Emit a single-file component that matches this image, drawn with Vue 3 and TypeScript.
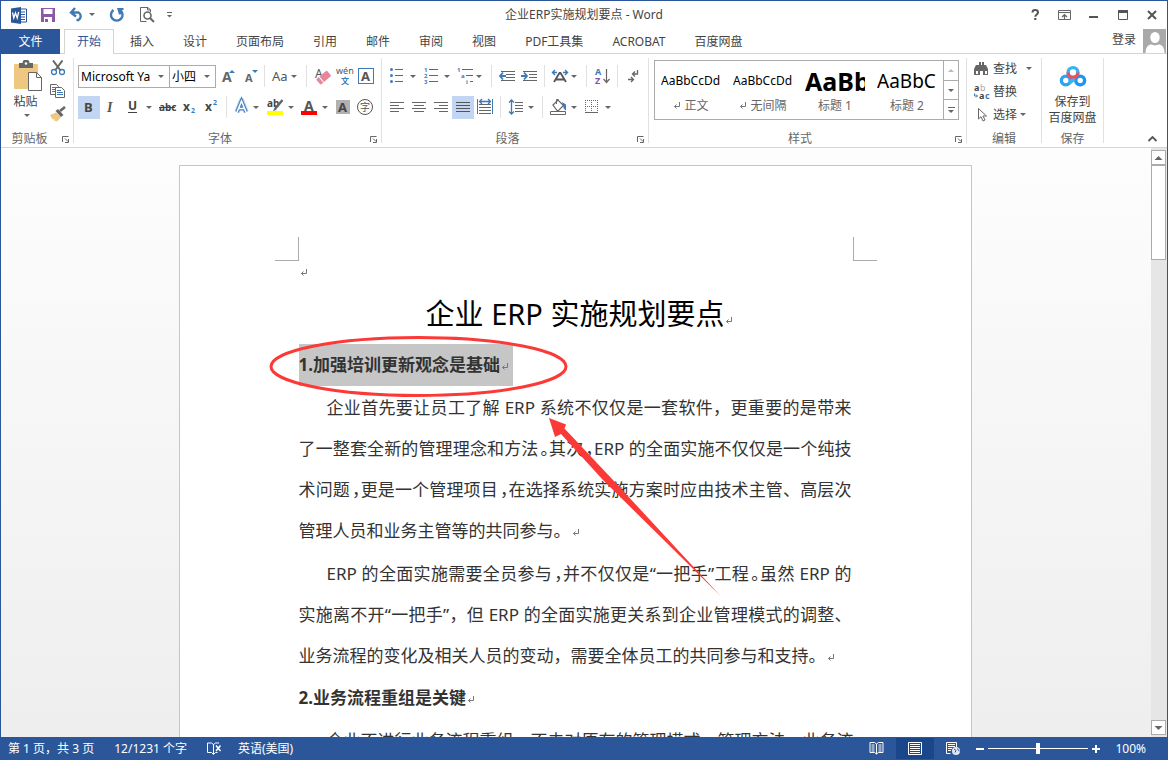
<script setup lang="ts">
import { h, ref } from 'vue'

type Icon = [x: number, y: number, w: number, h: number, body: string]

const G = '#666'
const B = '#3f7ab8'

const tri = (x: number, y: number) => `<path d="M${x - 3} ${y - 1}h6l-3 3z" fill="${G}"/>`
const lines = (rows: [number, number, number][], c = G) =>
  rows.map(([x, y, w]) => `<path d="M${x} ${y}h${w}v1h${-w}z" fill="${c}"/>`).join('')
const txt = (x: number, y: number, s: number, t: string, c = '#555', extra = '') =>
  `<text x="${x}" y="${y}" font-size="${s}" fill="${c}" ${extra}>${t}</text>`
const bold = 'font-weight="700"'

const icons: Record<string, Icon> = {
  word: [11, 7, 20, 17, `<path d="M19 9h7.500v13H19z" fill="#fff" stroke="#2b579a"/><path d="M21 12h4M21 14.500h4M21 17h4M21 19.500h4" stroke="#2b579a"/><path d="M11 8.500 21 7v17l-10-1.500z" fill="#2b579a"/><path d="m12.500 12.500 1.300 5.500 1.700-5 1.700 5 1.500-6" fill="none" stroke="#fff" stroke-width="1.300"/>`],
  save: [41, 8, 17, 14, `<path d="M41 8h14v14H41z" fill="#8a5aa8"/><path d="M43.500 9h9v5h-9zM44 17h8v5h-8z" fill="#fff"/><path d="M45 19h3v3h-3z" fill="#8a5aa8"/>`],
  undo: [68, 7, 31, 17, `<path d="m75 8-4 4.500 5 4M71.500 12.500h7a4.300 4.300 0 0 1 0 7.500h-2" fill="none" stroke="${B}" stroke-width="2.400"/>${tri(92, 14)}`],
  redo: [109, 7, 20, 17, `<path d="M113.500 10a5.800 5.800 0 1 0 6.500 0" fill="none" stroke="${B}" stroke-width="2.400"/><path d="M117 8h6.500v2H121v4.500h-2z" fill="${B}"/>`],
  preview: [139, 6, 17, 18, `<path d="M150.500 12V9.500l-3-2h-7v14h6" fill="none" stroke="${G}"/><path d="M147.500 7v3h3" fill="none" stroke="${G}"/><circle cx="147.500" cy="15.500" r="3.500" fill="#fff" stroke="${G}" stroke-width="1.600"/><path d="m150 18 4 4" stroke="${G}" stroke-width="2"/>`],
  custom: [166, 12, 8, 8, `<path d="M167 13h5v1h-5z" fill="${G}"/><path d="M167 16h5l-2.500 2.500z" fill="${G}"/>`],
  help: [1029, 7, 13, 16, `<path d="M1032.500 12.500c0-3.300 5.500-3.300 5.500 0 0 2-2.700 1.900-2.700 4.300" fill="none" stroke="#555" stroke-width="2"/><path d="M1034.200 18h2.200v2h-2.200z" fill="#555"/>`],
  ropt: [1058, 10, 14, 11, `<path d="M1058.500 10.500h12v9h-12zM1058 12.500h13" fill="none" stroke="${G}"/><path d="M1064.500 19v-4M1062 17l2.500-2.500 2.500 2.500" fill="none" stroke="${G}" stroke-width="1.200"/>`],
  min: [1088, 10, 14, 11, `<path d="M1089 16h9v2h-9z" fill="#555"/>`],
  max: [1118, 10, 13, 11, `<path d="M1118.500 10.500h9v9h-9z" fill="none" stroke="#555"/><path d="M1118 10h10v3h-10z" fill="#555"/>`],
  close: [1147, 10, 10, 11, `<path d="m1148 11 8 8m0-8-8 8" stroke="#555" stroke-width="2"/>`],
  user: [1143, 29, 23, 24, `<path d="M1143 29h23v24h-23z" fill="#a9a9a9"/><ellipse cx="1155" cy="37.500" rx="4.700" ry="5.500" fill="#fff"/><path d="M1145.500 53c0-6 3-8.500 6-8.500l3.500 1 3.500-1c3 0 6 2.500 6 8.500z" fill="#fff"/>`],
  paste: [12, 61, 31, 32, `<rect x="14" y="65" width="24" height="25" rx="1" fill="#eec780"/><path d="M19 64h3.500a3.500 3.500 0 0 1 7 0H33v5H19z" fill="${G}"/><circle cx="26" cy="64.500" r="1.300" fill="#fff"/><path d="M28.500 73.500h8l5 5v13h-13z" fill="#fff" stroke="${G}"/><path d="M36.500 73.500v5h5" fill="none" stroke="${G}"/>`],
  pasteArrow: [22, 113, 10, 8, tri(26, 116)],
  cut: [50, 60, 17, 16, `<path d="m53 60.500 7.500 10M62.500 60.500 55 70.500" stroke="${G}" stroke-width="2"/><circle cx="54" cy="72" r="2.500" fill="none" stroke="${B}" stroke-width="1.300"/><circle cx="62" cy="72" r="2.500" fill="none" stroke="${B}" stroke-width="1.300"/>`],
  copy: [50, 83, 17, 16, `<path d="M50.500 84.500h6l2 2v8h-8z" fill="#fff" stroke="${G}"/><path d="M52 87.500h4M52 89.500h3M52 91.500h3" stroke="${B}"/><path d="M55.500 87.500h6l3 3v7h-9z" fill="#fff" stroke="${G}"/><path d="M57 90.500h4M57 92.500h6M57 94.500h6" stroke="${B}"/>`],
  brush: [50, 106, 17, 16, `<path d="m50 115 6-2.500 5 4.500-4 4.500-3-1 .5-1.500-2 .5z" fill="#eec780"/><path d="m55.500 111 2.500-2 5.500 6-2.500 2z" fill="${G}"/><path d="m60 111 5-4" stroke="${G}" stroke-width="2.600"/>`],
  grow: [216, 65, 24, 23, `${txt(222, 82, 14, 'A', G, bold)}<path d="M229 73h6l-3-3z" fill="${B}"/>`],
  shrink: [240, 65, 22, 23, `${txt(245, 82, 11, 'A', G, bold)}<path d="M252 70h6l-3 3z" fill="${B}"/>`],
  aa: [267, 65, 37, 23, txt(272, 81, 13, 'Aa') + tri(294, 76)],
  erase: [309, 65, 24, 23, `${txt(315, 78, 12, 'A')}<g transform="rotate(-40 324 78)"><rect x="317" y="74" width="14" height="7" rx="1" fill="#e8869b"/><path d="M321 74v7" stroke="#fff"/></g>`],
  wen: [333, 65, 23, 23, txt(336, 74, 9, 'wén') + txt(341, 84, 8, '文', B, bold)],
  abox: [356, 65, 22, 23, `<rect x="358.500" y="68.500" width="15" height="15" fill="#fff" stroke="${B}"/>${txt(361, 81, 13, 'A', '#555', bold)}`],
  bold: [78, 96, 22, 23, txt(84, 112, 13, 'B', '#444', bold)],
  italic: [100, 96, 22, 23, `<text x="107" y="112" font-size="14" font-style="italic" font-weight="700" font-family="Liberation Serif, serif" fill="#555">I</text>`],
  under: [122, 96, 33, 23, `${txt(128, 110, 12, 'U', '#444', bold)}<path d="M128 112h9v1h-9z" fill="#444"/>${tri(149, 107)}`],
  strike: [155, 96, 24, 23, `${txt(159, 111, 10, 'abc', '#444', bold)}<path d="M159 107h16v1h-16z" fill="#444"/>`],
  sub: [179, 96, 22, 23, txt(183, 111, 12, 'x', '#444', bold) + txt(191, 113, 7, '2', B, bold)],
  sup: [201, 96, 23, 23, txt(205, 111, 12, 'x', '#444', bold) + txt(213, 105, 7, '2', B, bold)],
  glow: [229, 96, 34, 23, `<path d="m237 112 4.500-11.500L246 112M239 108.500h5" fill="none" stroke="#c3d9f0" stroke-width="5.500" stroke-linejoin="round"/><path d="m237 112 4.500-11 4.500 11M239 108.500h5" fill="none" stroke="${B}" stroke-width="3.600"/><path d="m237 112 4.500-11 4.500 11M239 108.500h5" fill="none" stroke="#fff" stroke-width="1.600"/>${tri(256, 107)}`],
  hilite: [263, 96, 34, 23, `${txt(267, 107, 10, 'ab', '#444', bold)}<path d="m282.500 100-7.500 9" stroke="${G}" stroke-width="2.500"/><path d="M267 111h16v4h-16z" fill="#ff0"/><path d="m273 111 1.500-3 2 2z" fill="${G}"/>${tri(291, 107)}`],
  fcolor: [297, 96, 34, 23, `${txt(304, 111, 14, 'A', '#555', bold)}<path d="M301 111h16v4h-16z" fill="red"/>${tri(325, 107)}`],
  shade: [331, 96, 23, 23, `<path d="M336 100h14v14h-14z" fill="#b1b1b1"/>${txt(338, 112, 13, 'A', '#444', bold)}`],
  circled: [354, 96, 23, 23, `<circle cx="365" cy="107" r="7.500" fill="none" stroke="#555"/>${txt(360, 111, 10, '字')}`],
  bullets: [386, 65, 33, 23, `<circle cx="391.500" cy="69.500" r="1.500" fill="${B}"/><circle cx="391.500" cy="75.500" r="1.500" fill="${B}"/><circle cx="391.500" cy="81.500" r="1.500" fill="${B}"/>${lines([[395, 69, 8], [395, 75, 8], [395, 81, 8]])}${tri(413, 76)}`],
  numbers: [419, 65, 35, 23, `${txt(424, 72, 6, '1', B, bold)}${txt(424, 78, 6, '2', B, bold)}${txt(424, 84, 6, '3', B, bold)}${lines([[429, 69, 9], [429, 75, 9], [429, 81, 9]])}${tri(447, 76)}`],
  multi: [454, 65, 35, 23, `${txt(457, 72, 6, '1', B, bold)}${txt(461, 78, 6, 'a', B, bold)}${txt(466, 84, 6, 'i', B, bold)}${lines([[462, 69, 11], [466, 75, 7], [470, 81, 3]])}${tri(479, 76)}`],
  outdent: [494, 65, 24, 23, `${lines([[501, 71, 14], [506, 74, 9], [506, 77, 9], [501, 80, 14]])}<path d="m503 72.500-3 3.500 3 3.500M500 76h6" fill="none" stroke="${B}" stroke-width="1.800"/>`],
  indent: [518, 65, 24, 23, `${lines([[523, 71, 14], [529, 74, 8], [529, 77, 8], [523, 80, 14]])}<path d="m524 72.500 3 3.500-3 3.500M521 76h6" fill="none" stroke="${B}" stroke-width="1.800"/>`],
  asian: [547, 65, 37, 23, `<path d="m554 82 5.500-9h1l5.500 9M556 79.500h8" fill="none" stroke="#555" stroke-width="1.800"/><path d="m555 70-2.500 2.500L555 75M553 72.500h4M565 70l2.500 2.500L565 75M567 72.500h-4" fill="none" stroke="${B}" stroke-width="1.400"/>${tri(574, 76)}`],
  sort: [589, 65, 26, 23, `${txt(595, 75, 9, 'A', B, bold)}${txt(595, 84, 9, 'Z', '#8a4fa8', bold)}<path d="M606.500 69v13M603.500 79l3 3.500 3-3.500" fill="none" stroke="${G}" stroke-width="1.200"/>`],
  marks: [620, 65, 24, 23, `<path d="M637.500 70v4h-5M635 71.500 632.500 74l2.500 2.500M628 79.500h5M631 77l2.500 2.500-2.500 2.500" fill="none" stroke="${G}" stroke-width="1.300"/>`],
  left: [386, 96, 22, 23, lines([[390, 102, 14], [390, 105, 9], [390, 108, 14], [390, 111, 9]])],
  center: [408, 96, 22, 23, lines([[412, 102, 14], [414, 105, 10], [412, 108, 14], [414, 111, 10]])],
  right: [430, 96, 22, 23, lines([[434, 102, 14], [439, 105, 9], [434, 108, 14], [439, 111, 9]])],
  justify: [452, 96, 22, 23, lines([[456, 102, 14], [456, 105, 14], [456, 108, 14], [456, 111, 14]], '#555')],
  distrib: [474, 96, 24, 23, `${lines([[479, 104, 12], [479, 107, 12], [479, 110, 12], [479, 113, 12]])}<path d="M477.500 99v15M492.500 99v15" stroke="${B}"/><path d="M480 101.500h10M482 99l-2.500 2.500L482 104M488 99l2.500 2.500L488 104" fill="none" stroke="${B}" stroke-width="1.300"/>`],
  spacing: [503, 96, 37, 23, `${lines([[515, 102, 8], [515, 105, 8], [515, 108, 8], [515, 111, 8]])}<path d="M511.500 100v14M509 102.500l2.500-2.500 2.500 2.500M509 111.500l2.500 2.500 2.500-2.500" fill="none" stroke="${B}" stroke-width="1.300"/>${tri(531, 107)}`],
  fill: [545, 96, 37, 23, `<path d="m553 105 5-5 5.500 5.500-5 5h-1.500z" fill="#fff" stroke="${G}" stroke-width="1.200"/><path d="M556.500 104v-4.500h2" fill="none" stroke="${G}"/><path d="m562 102 4 2.500v6l-2-1.500-1-3z" fill="${B}"/><path d="M550.500 111.500h15v3h-15z" fill="#fff" stroke="${G}"/>${tri(574, 107)}`],
  border: [582, 96, 34, 23, `<path d="M585.500 100v12M591.500 100v12M597.500 100v12M585 100.500h13M585 106.500h13" stroke="${G}" stroke-dasharray="1 1"/><path d="M585 112h13v1h-13z" fill="${G}"/>${tri(608, 107)}`],
  find: [973, 60, 18, 16, `<path d="M976 64h3v-3h2v3h1v-3h2v3h2l2 4v6h-5v-4h-3v4h-6v-6z" fill="${G}"/><path d="M975.500 69.500h3v4h-3zM984.500 69.500h3v4h-3z" fill="#fff" stroke="${G}"/>`],
  replace: [973, 82, 18, 18, `${txt(974, 90, 9, 'a', '#444', bold)}${txt(980, 90, 9, 'b', '#aaa')}${txt(979, 98, 9, 'a', '#444', bold)}${txt(985, 98, 9, 'c', B, bold)}<path d="M974.500 92.500v2.500h3M976 93.500l1.500 1.500-1.500 1.500" fill="none" stroke="${B}"/>`],
  select: [973, 106, 18, 16, `<path d="M978.500 107.500v10.500l2.500-2.300 2 4.300 2-1-2-4h3.500z" fill="#fff" stroke="${G}"/>`],
  down: [1025, 73, 9, 6, tri(1029, 75)],
  cloud: [1058, 64, 28, 23, `<g fill="none" stroke-width="3.400"><circle cx="1064.800" cy="79.500" r="4.400" stroke="#2ba3f0"/><circle cx="1079.200" cy="79.500" r="4.400" stroke="#1b95f3"/><circle cx="1072" cy="71.500" r="4.900" stroke="#35b6ee"/><path d="M1067.100 71.500a4.900 4.900 0 0 0 9.800 0" stroke="#f04c63"/><path d="m1068.500 82 5-4" stroke="#35b6ee"/></g>`],
  collapse: [1147, 135, 11, 8, `<path d="m1148.500 141 4-4 4 4" fill="none" stroke="#555" stroke-width="1.800"/>`],
  launch: [366, 135, 11, 8, `<path d="M370.500 142v-5.500h6" fill="none" stroke="${G}"/><path d="m373 138.500 3 3M376.500 139v3.500H373" fill="none" stroke="${G}"/>`],
  gUp: [946, 67, 10, 7, `<path d="M948 72h6l-3-3z" fill="#bbb"/>`],
  gDown: [946, 87, 10, 8, tri(951, 91)],
  gMore: [946, 105, 10, 10, `<path d="M948 107h7v1h-7z" fill="${G}"/>${tri(951, 111)}`],
  sUp: [1152, 151, 13, 13, `<path d="M1154.500 160h8l-4-4z" fill="${G}"/>`],
  sDown: [1152, 721, 13, 13, `<path d="M1154.500 726h8l-4 4z" fill="${G}"/>`],
  ret: [0, 0, 8, 8, `<path d="M6.500 0v4.500h-5M3.500 2.500l-2 2 2 2" fill="none" stroke="#777"/>`],
  proof: [212, 740, 16, 15, `<path d="M218.500 743v10M218.500 743.500l-2-1.500h-4v9.500h4l2 2 2-2h2M218.500 743.500l2-1.500h3.500" fill="none" stroke="#fff"/><path d="m221 744.500 4.500 5.500m0-5.500L221 750" stroke="#fff" stroke-width="1.500"/>`],
  read: [870, 740, 16, 15, `<path d="M877.500 743v10M877.500 743l-2-1.500h-4.500v10h4.500l2 1.500 2-1.500h4.500v-10h-4.500z" fill="none" stroke="#fff"/><path d="M872.500 744h3M872.500 746h3M872.500 748h3M872.500 750h3M879.500 744h3M879.500 746h3M879.500 748h3M879.500 750h3" stroke="#fff"/>`],
  print: [908, 740, 16, 15, `<path d="M909.500 741.500h13v12h-13z" fill="none" stroke="#fff"/>${lines([[911, 743, 10], [911, 745, 10], [911, 747, 10], [911, 749, 10], [911, 751, 10]], '#fff')}`],
  web: [946, 740, 17, 15, `<path d="M957.500 746v-4.500h-10v11h4" fill="none" stroke="#fff"/>${lines([[949, 743, 7], [949, 745, 7], [949, 747, 4], [949, 749, 3]], '#fff')}<circle cx="957" cy="750" r="4" fill="#dfe8f5"/><path d="m955 748 2 1.500-1 2M958.500 747.500l1 2 1 .5" fill="none" stroke="#2b579a"/>`],
}

const Ico = (p: { n: string }) => {
  const [x, y, w, ht, body] = icons[p.n]
  return h('svg', { viewBox: `${x} ${y} ${w} ${ht}`, width: w, height: ht, innerHTML: body, 'aria-hidden': 'true' })
}
Ico.props = ['n']

const tabs = ['开始', '插入', '设计', '页面布局', '引用', '邮件', '审阅', '视图', 'PDF工具集', 'ACROBAT', '百度网盘']
const activeTab = ref('开始')

type Cmd = [icon: string, label: string] | null
const fontTop: Cmd[] = [['grow', '增大字号'], ['shrink', '减小字号'], null, ['aa', '更改大小写'], null, ['erase', '清除格式'], ['wen', '拼音指南'], ['abox', '字符边框']]
const fontBottom: Cmd[] = [['bold', '加粗'], ['italic', '倾斜'], ['under', '下划线'], ['strike', '删除线'], ['sub', '下标'], ['sup', '上标'], null, ['glow', '文本效果'], ['hilite', '突出显示'], ['fcolor', '字体颜色'], ['shade', '字符底纹'], ['circled', '带圈字符']]
const paraTop: Cmd[] = [['bullets', '项目符号'], ['numbers', '编号'], ['multi', '多级列表'], null, ['outdent', '减少缩进量'], ['indent', '增加缩进量'], null, ['asian', '中文版式'], null, ['sort', '排序'], null, ['marks', '显示编辑标记']]
const paraBottom: Cmd[] = [['left', '左对齐'], ['center', '居中'], ['right', '右对齐'], ['justify', '两端对齐'], ['distrib', '分散对齐'], null, ['spacing', '行距'], null, ['fill', '底纹'], ['border', '边框']]
const pressed = ref(['bold', 'justify'])

const styles = [
  { name: '正文', sample: 'AaBbCcDd', cls: 'body', mark: true },
  { name: '无间隔', sample: 'AaBbCcDd', cls: 'body', mark: true },
  { name: '标题 1', sample: 'AaBb', cls: 'h1', mark: false },
  { name: '标题 2', sample: 'AaBbC', cls: 'h2', mark: false },
]
const zoom = ref(50)
</script>

<template>
  <div class="window">
    <header class="titlebar">
      <div class="quick">
        <Ico n="word" />
        <button aria-label="保存"><Ico n="save" /></button>
        <button aria-label="撤消"><Ico n="undo" /></button>
        <button aria-label="重复"><Ico n="redo" /></button>
        <button aria-label="打印预览"><Ico n="preview" /></button>
        <button aria-label="自定义快速访问工具栏"><Ico n="custom" /></button>
      </div>
      <h1 class="caption">企业ERP实施规划要点 - Word</h1>
      <div class="winctl">
        <button aria-label="帮助"><Ico n="help" /></button>
        <button aria-label="功能区显示选项"><Ico n="ropt" /></button>
        <button aria-label="最小化"><Ico n="min" /></button>
        <button aria-label="最大化"><Ico n="max" /></button>
        <button aria-label="关闭"><Ico n="close" /></button>
      </div>
    </header>

    <nav class="tabs">
      <button class="file">文件</button>
      <button v-for="t in tabs" :key="t" class="tab" :class="{ on: t === activeTab }" @click="activeTab = t">{{ t }}</button>
      <a class="login" href="#">登录</a>
      <Ico n="user" />
    </nav>

    <section class="ribbon">
      <div class="group clip">
        <div class="content">
          <button class="paste"><Ico n="paste" /><span>粘贴</span><Ico n="pasteArrow" /></button>
          <div class="stack">
            <button aria-label="剪切"><Ico n="cut" /></button>
            <button aria-label="复制"><Ico n="copy" /></button>
            <button aria-label="格式刷"><Ico n="brush" /></button>
          </div>
        </div>
        <footer><span>剪贴板</span><button aria-label="剪贴板选项"><Ico n="launch" /></button></footer>
      </div>

      <div class="group font">
        <div class="content rows">
          <div class="row">
            <label class="combo family"><select aria-label="字体"><option>Microsoft Ya</option></select><Ico n="down" /></label>
            <label class="combo size"><select aria-label="字号"><option>小四</option></select><Ico n="down" /></label>
            <template v-for="(c, i) in fontTop" :key="i">
              <button v-if="c" :aria-label="c[1]"><Ico :n="c[0]" /></button>
              <i v-else class="sep"></i>
            </template>
          </div>
          <div class="row">
            <template v-for="(c, i) in fontBottom" :key="i">
              <button v-if="c" :aria-label="c[1]" :class="{ pressed: pressed.includes(c[0]) }"><Ico :n="c[0]" /></button>
              <i v-else class="sep"></i>
            </template>
          </div>
        </div>
        <footer><span>字体</span><button aria-label="字体选项"><Ico n="launch" /></button></footer>
      </div>

      <div class="group para">
        <div class="content rows">
          <div v-for="(r, k) in [paraTop, paraBottom]" :key="k" class="row">
            <template v-for="(c, i) in r" :key="i">
              <button v-if="c" :aria-label="c[1]" :class="{ pressed: pressed.includes(c[0]) }"><Ico :n="c[0]" /></button>
              <i v-else class="sep"></i>
            </template>
          </div>
        </div>
        <footer><span>段落</span><button aria-label="段落选项"><Ico n="launch" /></button></footer>
      </div>

      <div class="group styles">
        <div class="gallery">
          <button v-for="s in styles" :key="s.name" class="style">
            <span class="sample" :class="s.cls">{{ s.sample }}</span>
            <span class="name"><Ico v-if="s.mark" n="ret" />{{ s.name }}</span>
          </button>
          <div class="scroller">
            <button aria-label="上一行"><Ico n="gUp" /></button>
            <button aria-label="下一行"><Ico n="gDown" /></button>
            <button aria-label="其他"><Ico n="gMore" /></button>
          </div>
        </div>
        <footer><span>样式</span><button aria-label="样式选项"><Ico n="launch" /></button></footer>
      </div>

      <div class="group edit">
        <div class="list">
          <button><Ico n="find" /><span>查找</span><Ico class="far" n="down" /></button>
          <button><Ico n="replace" /><span>替换</span></button>
          <button><Ico n="select" /><span>选择</span><Ico class="near" n="down" /></button>
        </div>
        <footer><span>编辑</span></footer>
      </div>

      <div class="group cloud">
        <button class="save"><Ico n="cloud" /><span>保存到<br>百度网盘</span></button>
        <footer><span>保存</span></footer>
      </div>
      <button class="collapse" aria-label="折叠功能区"><Ico n="collapse" /></button>
    </section>

    <main class="workspace">
      <div class="canvas">
        <article class="page">
          <div class="corners"><i></i><i></i></div>
          <div class="text">
            <p class="blank"><Ico n="ret" /></p>
            <h2>企业 ERP 实施规划要点<Ico n="ret" /></h2>
            <h3><span class="selected">1.加强培训更新观念是基础<Ico n="ret" /></span></h3>
            <div class="block">
              <p class="fit ind">企业首先要让员工了解 ERP 系统不仅仅是一套软件，更重要的是带来</p>
              <p class="fit">了一整套全新的管理理念和方法<i>。</i>其次<i>，</i>ERP 的全面实施不仅仅是一个纯技</p>
              <p class="fit">术问题<i>，</i>更是一个管理项目<i>，</i>在选择系统实施方案时应由技术主管、高层次</p>
              <p>管理人员和业务主管等的共同参与。<Ico n="ret" /></p>
            </div>
            <div class="block">
              <p class="fit ind">ERP 的全面实施需要全员参与<i>，</i>并不仅仅是“一把手”工程<i>。</i>虽然 ERP 的</p>
              <p class="fit">实施离不开“一把手”，但 ERP 的全面实施更关系到企业管理模式的调整、</p>
              <p>业务流程的变化及相关人员的变动，需要全体员工的共同参与和支持。<Ico n="ret" /></p>
            </div>
            <h3>2.业务流程重组是关键<Ico n="ret" /></h3>
            <div class="block">
              <p class="fit ind">企业不进行业务流程重组，不去对原有的管理模式、管理方法、业务流</p>
            </div>
          </div>
          <svg class="ink" viewBox="179 165 793 573" width="793" height="573" aria-hidden="true">
            <ellipse cx="418.500" cy="366.500" rx="147.500" ry="29" fill="none" stroke="#fb3a37" stroke-width="3" />
            <path d="M549 418 566 424.500 564.500 428.500 613 480 721 596.500 603 480 561 434 555 437z" fill="#fb3a37" />
          </svg>
        </article>
      </div>
      <div class="scrollbar">
        <button aria-label="向上滚动"><Ico n="sUp" /></button>
        <div class="thumb"></div>
        <button class="end" aria-label="向下滚动"><Ico n="sDown" /></button>
      </div>
    </main>

    <footer class="status">
      <span>第 1 页，共 3 页</span>
      <span>12/1231 个字</span>
      <button aria-label="校对"><Ico n="proof" /></button>
      <span>英语(美国)</span>
      <div class="views">
        <button aria-label="阅读视图"><Ico n="read" /></button>
        <button class="on" aria-label="页面视图"><Ico n="print" /></button>
        <button aria-label="Web 版式视图"><Ico n="web" /></button>
      </div>
      <button class="step minus" aria-label="缩小"></button>
      <input v-model="zoom" type="range" min="0" max="100" aria-label="缩放">
      <button class="step plus" aria-label="放大"></button>
      <span class="pct">100%</span>
    </footer>
  </div>
</template>

<style>
body {
  margin: 0;
}
</style>

<style scoped>
.window {
  box-sizing: border-box;
  height: 100vh;
  display: flex;
  flex-direction: column;
  border: 1px solid #2b579a;
  border-bottom: 0;
  background: #fff;
  color: #444;
  font: 12px/16px "Noto Sans", "Noto Sans CJK SC", sans-serif;
  overflow: hidden;
}
.window * {
  box-sizing: border-box;
}
button {
  display: flex;
  align-items: center;
  justify-content: center;
  margin: 0;
  padding: 0;
  border: 0;
  background: none;
  color: inherit;
  font: inherit;
}
svg {
  display: block;
  flex: none;
}
h1, h2, h3, p {
  margin: 0;
  font: inherit;
}

.titlebar {
  display: grid;
  grid-template-columns: 1fr auto 1fr;
  align-items: center;
  height: 28px;
  flex: none;
}
.quick {
  display: flex;
  align-items: center;
  gap: 10px;
  padding-left: 10px;
}
.winctl {
  display: flex;
  align-items: center;
  justify-content: flex-end;
  gap: 16px;
  padding-right: 10px;
}

.tabs {
  display: flex;
  height: 25px;
  flex: none;
  padding-right: 1px;
  border-bottom: 1px solid #d4d4d4;
}
.file {
  width: 59px;
  height: 25px;
  margin-right: 4px;
  background: #2b579a;
  color: #fff;
}
.tab {
  height: 24px;
  padding: 0 12px;
  margin-right: 3px;
  border: 1px solid transparent;
  border-bottom: 0;
}
.tab.on {
  height: 25px;
  border-color: #d4d4d4;
  background: #fff;
  color: #2b579a;
}
.login {
  margin: 3px 7px 0 auto;
  color: #444;
  text-decoration: none;
}

.ribbon {
  display: flex;
  flex: none;
  height: 94px;
  padding: 4px 0;
  border-bottom: 1px solid #d4d4d4;
}
.group {
  display: flex;
  flex-direction: column;
  flex: none;
  height: 85px;
  border-right: 1px solid #e1e1e1;
}
.group footer {
  display: flex;
  align-items: flex-end;
  height: 12px;
  margin-top: auto;
  color: #666;
}
.group footer span {
  flex: 1;
  align-self: flex-start;
  text-align: center;
  line-height: 16px;
}
.group footer button {
  width: 15px;
  justify-content: flex-start;
}
.clip {
  width: 73px;
}
.clip .content {
  display: flex;
  gap: 7px;
  padding: 2px 0 0 11px;
}
.paste {
  flex-direction: column;
  justify-content: flex-start;
}
.paste span {
  margin: 2px 4px 0 0;
}
.paste svg:last-child {
  margin-top: 2px;
}
.stack {
  display: flex;
  flex-direction: column;
  gap: 7px;
}
.rows {
  display: flex;
  flex-direction: column;
  gap: 8px;
  padding: 7px 0 0 4px;
}
.row {
  display: flex;
}
.sep {
  width: 1px;
  height: 22px;
  margin: 0 2px;
  background: #e1e1e1;
}
.pressed {
  background: #c2d5f2;
}
.combo {
  display: flex;
  align-items: center;
  flex: none;
  height: 23px;
  padding-right: 3px;
  border: 1px solid #ababab;
}
.family {
  width: 92px;
}
.size {
  width: 47px;
  margin-left: -1px;
}
.combo select {
  appearance: none;
  flex: 1;
  min-width: 0;
  padding: 0 0 0 2px;
  border: 0;
  background: none;
  color: #000;
  font: inherit;
}
.font {
  width: 308px;
}
.para {
  width: 267px;
}
.styles {
  width: 318px;
}
.gallery {
  display: flex;
  height: 60px;
  margin: 2px 7px 0 5px;
  border: 1px solid #ababab;
}
.style {
  flex: 1 1 72px;
  flex-direction: column;
  min-width: 0;
  overflow: hidden;
  padding: 0 6px;
}
.sample {
  width: 60px;
  height: 38px;
  overflow: hidden;
  color: #000;
  line-height: 40px;
  text-align: left;
  white-space: nowrap;
}
.sample.h1 {
  font-size: 25px;
  font-weight: 700;
}
.sample.h2 {
  font-size: 19px;
}
.name {
  display: flex;
  align-items: center;
  gap: 3px;
  height: 20px;
  padding-bottom: 6px;
  color: #666;
}
.scroller {
  display: flex;
  flex-direction: column;
  width: 15px;
  border-left: 1px solid #ababab;
}
.scroller button {
  flex: 1;
}
.scroller button + button {
  border-top: 1px solid #ababab;
}
.edit {
  width: 75px;
}
.list {
  display: flex;
  flex-direction: column;
  gap: 7px;
  padding: 3px 0 0 6px;
}
.list button {
  justify-content: flex-start;
  height: 16px;
}
.list svg:first-child {
  margin-right: 2px;
}
.list .far {
  margin-left: 8px;
}
.list .near {
  margin-left: 2px;
}
.cloud {
  width: 62px;
}
.save {
  flex-direction: column;
  gap: 6px;
  padding-top: 7px;
  line-height: 16px;
}
.collapse {
  align-self: flex-end;
  margin: 0 9px 0 auto;
}

.workspace {
  display: flex;
  flex: 1;
  min-height: 0;
  background: linear-gradient(#fdfdfd, #eee);
}
.canvas {
  flex: 1;
  display: flex;
  justify-content: center;
  padding: 17px 2px 0 0;
  overflow: hidden;
}
.page {
  position: relative;
  width: 100%;
  max-width: 793px;
  height: max-content;
  padding-top: 71px;
  border: 1px solid #c6c6c6;
  background: #fff;
}
.corners {
  display: flex;
  justify-content: space-between;
  padding: 0 94px 0 95px;
}
.corners i {
  width: 24px;
  height: 24px;
  border: solid #ababab;
  border-width: 0 1px 1px 0;
}
.corners i + i {
  border-width: 0 0 1px 1px;
}
.text {
  padding: 0 119px;
  color: #333;
  font-size: 17px;
  line-height: 41px;
}
.text svg {
  display: inline-block;
  margin-left: 1px;
}
.text p {
  white-space: nowrap;
}
.text .blank {
  height: 22px;
  line-height: 20px;
}
.text h2 {
  height: 61px;
  margin-right: -9px;
  color: #000;
  font-size: 29px;
  line-height: 62px;
  text-align: center;
}
.text h3 {
  height: 42px;
  line-height: 42px;
  font-weight: 700;
}
.selected {
  display: inline-block;
  height: 42px;
  padding-right: 4px;
  background: #c6c6c6;
}
.block {
  padding: 1px 0;
}
.fit {
  text-align: justify;
  text-align-last: justify;
}
.ind {
  padding-left: 28px;
}
.text i {
  padding-left: 2px;
  font-style: normal;
  font-feature-settings: "halt";
}
.ink {
  position: absolute;
  top: -1px;
  left: -1px;
}
.scrollbar {
  display: flex;
  flex-direction: column;
  width: 16px;
  padding: 2px 1px 2px 0;
  background: #e6e6e6;
}
.scrollbar button, .thumb {
  width: 15px;
  height: 15px;
  border: 1px solid #ababab;
  background: #fff;
}
.thumb {
  height: 95px;
}
.scrollbar .end {
  margin-top: auto;
}

.status {
  display: flex;
  align-items: center;
  flex: none;
  height: 23px;
  padding: 0 21px 0 7px;
  background: #2b579a;
  color: #fff;
}
.status > span {
  margin-right: 20px;
}
.status > button {
  margin-right: 15px;
}
.views {
  display: flex;
  margin-left: auto;
}
.views button {
  width: 38px;
  height: 21px;
}
.views .on {
  background: #19478a;
}
.status .step {
  width: 8px;
  height: 8px;
  margin: 0 4px;
  background: linear-gradient(#fff, #fff) center / 8px 2px no-repeat;
}
.status .plus {
  background: linear-gradient(#fff, #fff) center / 8px 2px no-repeat, linear-gradient(#fff, #fff) center / 2px 8px no-repeat;
}
.status input {
  appearance: none;
  width: 100px;
  height: 12px;
  margin: 0;
  background: linear-gradient(#fff, #fff) center / 100% 1px no-repeat;
}
.status input::-webkit-slider-thumb {
  appearance: none;
  width: 4px;
  height: 11px;
  background: #fff;
}
.status .pct {
  margin: 0 0 0 11px;
}
</style>
